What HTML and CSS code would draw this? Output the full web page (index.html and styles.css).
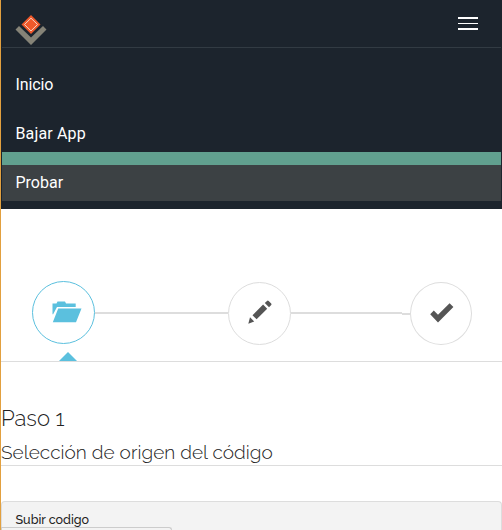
FILE: index.html
```html
<!DOCTYPE html>
<html lang="es">
<head>
<meta charset="utf-8">
<title>Probar</title>
<link rel="stylesheet" href="styles.css">
</head>
<body>
<header class="navbar">
  <div class="navbar-top">
    <svg class="logo" width="32" height="32" viewBox="0 0 32 32">
      <path d="M0.5 14.5 L4 11 L16 22.5 L28 11 L31.5 14.5 L16 30Z" fill="#858377"/>
      <path d="M16 0 L25.5 9.5 L16 19 L6.5 9.5Z" fill="#f0592b"/>
      <path d="M16 3.2 L22.5 9.5 L16 15.9 L9.5 9.5Z" fill="none" stroke="#f9d3c2" stroke-width="1"/>
    </svg>
    <div class="toggle"><span></span><span></span><span></span></div>
  </div>
  <nav class="menu">
    <a class="item inicio">Inicio</a>
    <a class="item bajar">Bajar App</a>
    <a class="item probar active">Probar</a>
  </nav>
</header>
<main>
  <div class="wizard">
    <div class="step active">
      <svg width="30" height="22" viewBox="0 0 30 22"><path d="M0.5 13 V2.5 H4.5 L5.5 0.5 H13 L14 2.5 H23.7 V6 H5 L1 13.5Z M6.2 7.5 H29.5 L24 21.3 H0.8Z" fill="#5bc0de"/></svg>
    </div>
    <div class="line"></div>
    <div class="step">
      <svg width="24" height="24" viewBox="0 0 24 24"><path d="M0.3 23.7 L2 17.3 L6.2 21.6Z M4.5 15.2 L15.1 4.6 L19.2 8.7 L8.6 19.3Z M16.8 3 L19 0.9 Q19.8 0.2 20.7 1 L23.2 3.5 Q23.9 4.4 23 5.2 L21 7.2Z" fill="#555"/></svg>
    </div>
    <div class="line middle"></div>
    <div class="line short"></div>
    <div class="step last">
      <svg width="24" height="20" viewBox="0 0 24 20"><path d="M0.2 11.2 L3.8 7.5 L8 11.7 L19.6 0.3 L23.4 4 L8 19.5Z" fill="#555"/></svg>
    </div>
  </div>
  <h1 class="title">Paso 1</h1>
  <h2 class="subtitle">Selección de origen del código</h2>
  <section class="panel">
    <div class="panel-title">Subir codigo</div>
    <div class="file-button"></div>
  </section>
</main>
</body>
</html>
```
FILE: styles.css
```css
* { box-sizing: border-box; }
body {
  margin: 0;
  height: 530px;
  border-left: 1px solid #e2a03f;
  background: #fff;
  color: #222;
  font-family: Raleway, Lato, sans-serif;
}
.navbar { height: 209px; background: #1c242d; }
.navbar-top {
  display: flex;
  justify-content: space-between;
  align-items: flex-start;
  height: 48px;
  margin: 0 1px;
  padding: 15px 23px 0 13px;
  border-bottom: 1px solid #323b43;
}
.toggle { display: flex; flex-direction: column; gap: 4px; padding-top: 2px; }
.toggle span { width: 20px; height: 2px; background: #fff; }
.toggle span:nth-child(2) { height: 1px; }
.menu { padding: 6px 1px 0; }
.item {
  display: block;
  height: 49px;
  padding-left: 13.5px;
  border-top: 13px solid transparent;
  color: #fff;
  font: 16px/35px Roboto, sans-serif;
}
.inicio { letter-spacing: -.1px; }
.bajar { letter-spacing: .15px; }
.item.active { background: #3c4144; border-top-color: #61a08f; }
.wizard {
  display: flex;
  align-items: flex-start;
  position: relative;
  height: 153px;
  padding: 72px 30px 0 31px;
  border-bottom: 1px solid #ddd;
}
.wizard::after {
  content: "";
  position: absolute;
  left: 58px;
  bottom: 0;
  border: 9px solid transparent;
  border-top: 0;
  border-bottom-color: #5bc0de;
}
.step {
  display: flex;
  align-items: center;
  justify-content: center;
  flex: none;
  width: 63px;
  height: 63px;
  margin-top: 1px;
  border: 1px solid #ddd;
  border-radius: 50%;
}
.step svg { margin-bottom: 4px; }
.step.active { margin-top: 0; border-color: #5bc0de; }
.step.active svg { margin: 0 0 2px 6px; }
.step.last { width: 62px; }
.step.last svg { margin: 0 0 2px 2px; }
.line { flex: 1; height: 2px; margin-top: 31px; background: #ddd; }
.line.middle { flex: none; width: 111px; }
.line.short { flex: none; width: 8px; margin-top: 32px; }
h1, h2 { margin: 0; font-weight: 300; }
.title { height: 57px; padding-top: 42px; font-size: 22px; line-height: 28px; }
.subtitle { height: 47px; padding-top: 20px; border-bottom: 1px solid #ddd; font-size: 19px; line-height: 26px; letter-spacing: .06px; white-space: nowrap; }
.panel {
  height: 29px;
  margin-top: 35px;
  border: 1px solid #ddd;
  border-bottom: 0;
  border-radius: 4px 4px 0 0;
  background: #f3f3f3;
}
.panel-title { height: 25px; padding: 8px 0 0 13.5px; font-size: 12.5px; font-weight: 500; line-height: 19px; }
.file-button { width: 171px; height: 3px; margin-left: -1px; border: 1px solid #ccc; border-bottom: 0; border-radius: 0 3px 0 0; }
```
